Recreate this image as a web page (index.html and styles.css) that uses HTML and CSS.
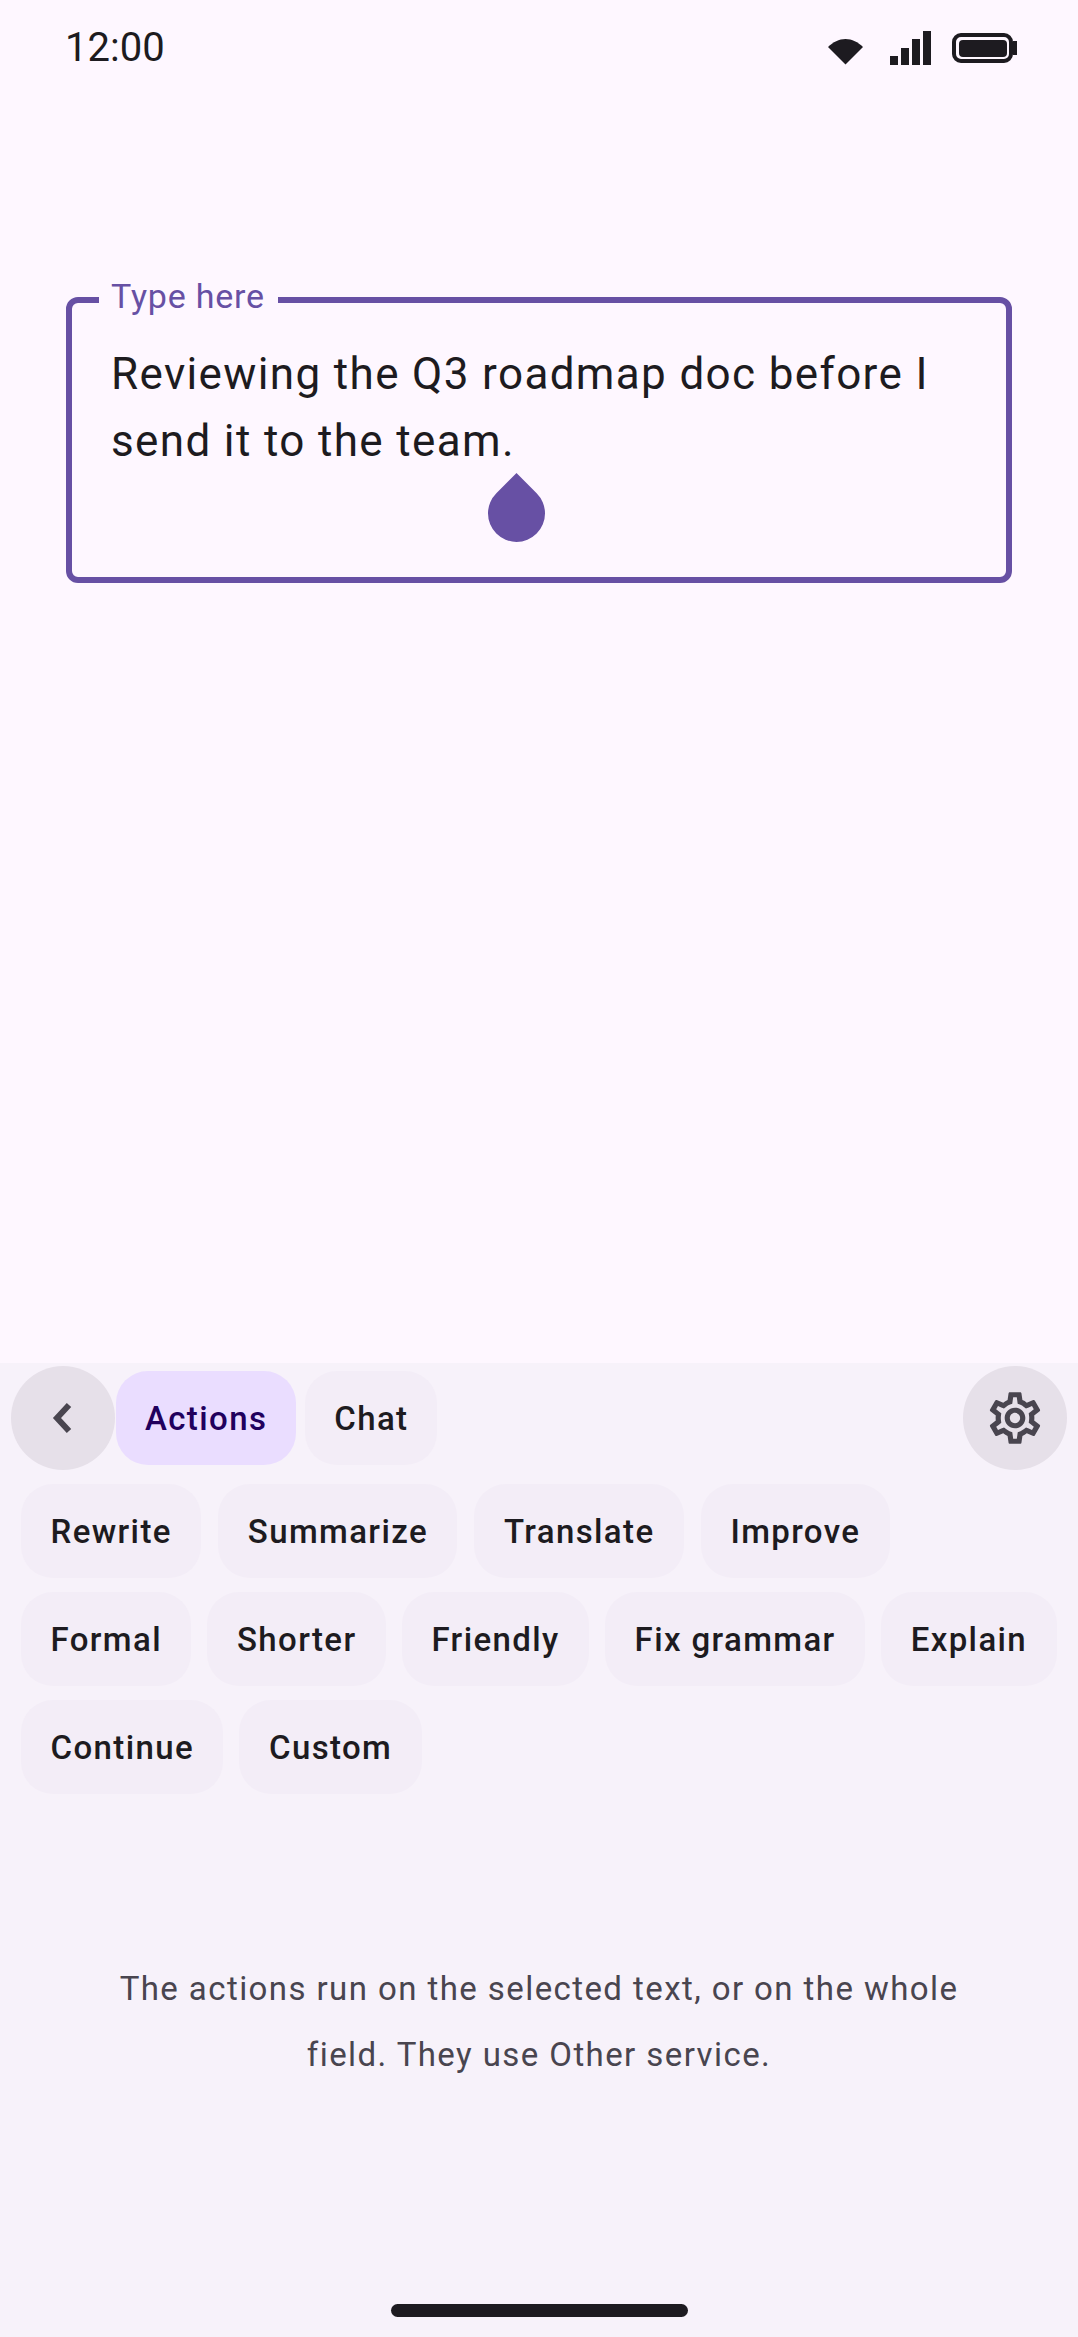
FILE: index.html
```html
<!DOCTYPE html>
<html lang="en">
<head>
<meta charset="utf-8">
<title>Actions</title>
<link rel="stylesheet" href="styles.css">
</head>
<body>
<div class="screen">
  <div class="status">
    <span class="clock">12:00</span>
    <div class="status-icons">
      <svg class="wifi" width="35" height="26" viewBox="0 0 35 26"><path class="ink" d="M0 8 C5 3 11 0 17.5 0 C24 0 30 3 35 8 L17.5 25.5 Z"/></svg>
      <svg class="signal" width="41" height="34" viewBox="0 0 41 34"><path class="ink" d="M0 25h8v9H0zM11 17h8v17h-8zM22 8h8v26h-8zM33 0h8v34h-8z"/></svg>
      <svg class="battery" width="65" height="30" viewBox="0 0 65 30"><rect class="outline" x="2" y="2" width="57" height="26" rx="7"/><rect class="ink" x="7" y="7" width="48" height="17" rx="4"/><rect class="ink" x="61" y="8" width="4" height="14"/></svg>
    </div>
  </div>
  <div class="main">
    <div class="field">
      <span class="field-label">Type here</span>
      <p class="field-text">Reviewing the Q3 roadmap doc before I send it to the team.</p>
      <svg class="handle" width="57" height="69" viewBox="0 0 58 70"><path d="M29 0 L49.5 20.5 A29 29 0 1 1 8.5 20.5 Z"/></svg>
    </div>
  </div>
  <div class="keyboard">
    <div class="tabs">
      <button class="round"><svg width="32" height="36" viewBox="0 0 32 36"><path class="stroke" d="M22 5 L10 18 L22 31"/></svg></button>
      <span class="chip tab active">Actions</span>
      <span class="chip tab">Chat</span>
      <button class="round gear"><svg width="62" height="62" viewBox="0 0 24 24"><path class="gear-path" d="M19.43 12.98c.04-.32.07-.64.07-.98 0-.34-.03-.66-.07-.98l2.11-1.65c.19-.15.24-.42.12-.64l-2-3.46c-.09-.16-.26-.25-.44-.25-.06 0-.12.01-.17.03l-2.49 1c-.52-.4-1.08-.73-1.69-.98l-.38-2.65C14.46 2.18 14.25 2 14 2h-4c-.25 0-.46.18-.49.42l-.38 2.65c-.61.25-1.17.59-1.69.98l-2.49-1c-.06-.02-.12-.03-.18-.03-.17 0-.34.09-.43.25l-2 3.46c-.13.22-.07.49.12.64l2.11 1.65c-.04.32-.07.65-.07.98 0 .33.03.66.07.98l-2.11 1.65c-.19.15-.24.42-.12.64l2 3.46c.09.16.26.25.44.25.06 0 .12-.01.17-.03l2.49-1c.52.4 1.08.73 1.69.98l.38 2.65c.03.24.24.42.49.42h4c.25 0 .46-.18.49-.42l.38-2.65c.61-.25 1.17-.59 1.69-.98l2.49 1c.06.02.12.03.18.03.17 0 .34-.09.43-.25l2-3.46c.12-.22.07-.49-.12-.64l-2.11-1.65zm-1.98-1.71c.04.31.05.52.05.73 0 .21-.02.43-.05.73l-.14 1.13.89.7 1.08.84-.7 1.21-1.27-.51-1.04-.42-.9.68c-.43.32-.84.56-1.25.73l-1.06.43-.16 1.13-.2 1.35h-1.4l-.19-1.35-.16-1.13-1.06-.43c-.43-.18-.83-.41-1.23-.71l-.91-.7-1.06.43-1.27.51-.7-1.21 1.08-.84.89-.7-.14-1.13c-.03-.31-.05-.54-.05-.74s.02-.43.05-.73l.14-1.13-.89-.7-1.08-.84.7-1.21 1.27.51 1.04.42.9-.68c.43-.32.84-.56 1.25-.73l1.06-.43.16-1.13.2-1.35h1.39l.19 1.35.16 1.13 1.06.43c.43.18.83.41 1.23.71l.91.7 1.06-.43 1.27-.51.7 1.21-1.07.85-.89.7.14 1.13zM12 8c-2.21 0-4 1.79-4 4s1.79 4 4 4 4-1.79 4-4-1.79-4-4-4zm0 6c-1.1 0-2-.9-2-2s.9-2 2-2 2 .9 2 2-.9 2-2 2z"/></svg></button>
    </div>
    <div class="chips">
      <div class="chip-row chip-row-wide">
        <span class="chip">Rewrite</span>
        <span class="chip">Summarize</span>
        <span class="chip">Translate</span>
        <span class="chip">Improve</span>
      </div>
      <div class="chip-row">
        <span class="chip">Formal</span>
        <span class="chip">Shorter</span>
        <span class="chip">Friendly</span>
        <span class="chip">Fix grammar</span>
        <span class="chip">Explain</span>
      </div>
      <div class="chip-row">
        <span class="chip">Continue</span>
        <span class="chip">Custom</span>
      </div>
    </div>
    <p class="hint">The actions run on the selected text, or on the whole field. They use Other service.</p>
    <div class="nav"><span class="nav-pill"></span></div>
  </div>
</div>
</body>
</html>
```
FILE: styles.css
```css
* { box-sizing: border-box; }
html, body { margin: 0; padding: 0; }
body { width: 1078px; height: 2337px; background: #fef7ff; font-family: Roboto, "Liberation Sans", sans-serif; color: #1d1b20; overflow: hidden; }
.screen { display: flex; flex-direction: column; height: 2337px; }
.status { height: 96px; flex: none; display: flex; align-items: center; justify-content: space-between; padding: 0 61px 0 65px; }
.clock { font-size: 40px; line-height: 1; }
.status-icons { display: flex; align-items: center; }
.ink { fill: #1d1b20; }
.outline { fill: none; stroke: #1d1b20; stroke-width: 4; }
.wifi { margin-top: 8px; margin-right: 27px; }
.signal { margin-right: 21px; }
.main { flex: 1; min-height: 0; padding: 201px 66px 0; }
.field { position: relative; height: 286px; border: 6px solid #6750a4; border-radius: 12px; padding: 38px 40px 0 39px; }
.field-label { position: absolute; left: 27px; top: -27px; padding: 0 13px 0 12px; background: #fef7ff; color: #6750a4; font-size: 34px; font-weight: 380; line-height: 40px; letter-spacing: 0.8px; }
.field-text { margin: 0; font-size: 44px; font-weight: 380; line-height: 67px; letter-spacing: 1.36px; }
.handle { position: absolute; left: 416px; top: 170px; }
.handle path { fill: #6750a4; }
.keyboard { flex: none; height: 974px; background: #f7f2fa; display: flex; flex-direction: column; position: relative; }
.tabs { display: flex; align-items: center; padding: 3px 11px 0; height: 107px; }
.round { width: 104px; height: 104px; flex: none; border: 0; padding: 0; border-radius: 50%; background: #e6e0e9; display: flex; align-items: center; justify-content: center; }
.round svg { display: block; }
.stroke { fill: none; stroke: #49454f; stroke-width: 6; }
.gear { margin-left: auto; }
.gear-path { fill: #49454f; }
.chip { height: 94px; flex: none; display: flex; align-items: center; padding: 0 29.5px; border-radius: 32px; background: #f3edf7; font-size: 33px; font-weight: 465; letter-spacing: 1.38px; }
.tab { margin-right: 9px; padding: 0 29px; }
.tab.active { margin-left: 1px; background: #eaddff; color: #21005d; }
.chips { display: flex; flex-direction: column; gap: 14px; padding: 14px 21px 0; }
.chip-row { display: flex; gap: 16px; }
.chip-row-wide { gap: 17px; }
.hint { margin: 162px 100px 0; text-align: center; font-size: 33px; line-height: 66px; letter-spacing: 1.42px; color: #49454f; }
.nav { position: absolute; left: 0; right: 0; bottom: 20px; display: flex; justify-content: center; }
.nav-pill { width: 297px; height: 13px; background: #1d1b20; border-radius: 6.5px; }
```
